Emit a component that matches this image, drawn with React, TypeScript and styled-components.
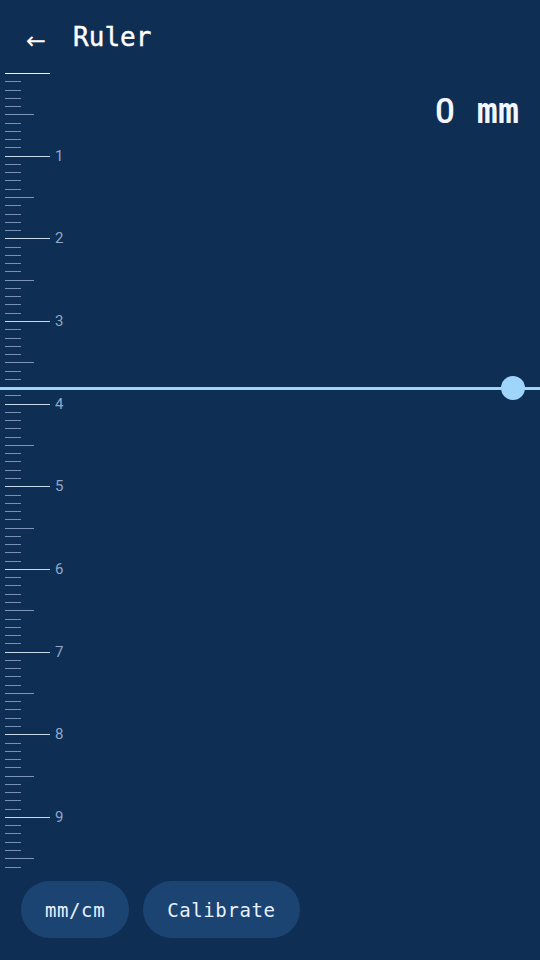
import React from 'react';
import styled, { createGlobalStyle } from 'styled-components';

const GlobalStyle = createGlobalStyle`
  html, body {
    margin: 0;
    padding: 0;
    background: #0f2e54;
  }
  #root {
    height: 960px;
  }
`;

const MM = 8.267;

const Screen = styled.div`
  position: relative;
  width: 540px;
  height: 960px;
  background: #0f2e54;
  display: flex;
  flex-direction: column;
  overflow: hidden;
  font-family: 'DejaVu Sans Mono', monospace;
  color: #ffffff;
`;

const Header = styled.div`
  display: flex;
  align-items: center;
  height: 73px;
  padding: 0 0 0 26px;
  gap: 27px;
  box-sizing: border-box;
`;

const BackButton = styled.button`
  background: none;
  border: none;
  padding: 0;
  color: #ffffff;
  font-family: 'DejaVu Sans', sans-serif;
  font-size: 24px;
  line-height: 1;
  margin-top: 8px;
  cursor: pointer;
`;

const Title = styled.h1`
  margin: 0;
  font-size: 26px;
  font-weight: normal;
  -webkit-text-stroke: 0.4px #ffffff;
`;

const Body = styled.div`
  position: relative;
  flex: 1;
  display: flex;
  flex-direction: column;
`;

const Ruler = styled.div`
  display: flex;
  flex-direction: column;
  padding-left: 5px;
`;

const TickRow = styled.div`
  position: relative;
  height: ${MM}px;
  flex-shrink: 0;
`;

const TickLine = styled.div<{ $len: number; $color: string }>`
  width: ${p => p.$len}px;
  height: 1px;
  background: ${p => p.$color};
`;

const TickLabel = styled.span`
  position: absolute;
  left: 50px;
  top: -8px;
  font-family: Roboto, 'Noto Sans', sans-serif;
  font-size: 15px;
  line-height: 16px;
  color: #8ea8c9;
`;

const Readout = styled.div`
  position: absolute;
  right: 21px;
  top: 18px;
  display: flex;
  align-items: baseline;
  gap: 22px;
  color: #f2f7ff;
`;

const Value = styled.span`
  font-family: Roboto, 'Noto Sans', sans-serif;
  font-size: 35px;
  font-weight: 500;
`;

const Unit = styled.span`
  font-family: 'DejaVu Sans Mono', monospace;
  font-size: 35px;
  font-weight: bold;
`;

const MeasureLine = styled.div`
  position: absolute;
  left: 0;
  right: 0;
  top: 314px;
  height: 3px;
  background: #9fd4fb;
`;

const Handle = styled.div`
  position: absolute;
  right: 15px;
  top: -11px;
  width: 24px;
  height: 24px;
  border-radius: 50%;
  background: #9fd4fb;
`;

const Footer = styled.div`
  display: flex;
  gap: 14px;
  padding: 0 0 22px 21px;
`;

const Pill = styled.button`
  height: 57px;
  padding: 0 24px;
  border: none;
  border-radius: 29px;
  background: #1b4472;
  color: #e8f1fc;
  font-family: 'DejaVu Sans Mono', monospace;
  font-size: 19px;
  letter-spacing: 0.6px;
  cursor: pointer;
`;

const ticks = Array.from({ length: 97 }, (_, i) => i);

export default function App() {
  return (
    <>
      <GlobalStyle />
      <Screen>
        <Header>
          <BackButton type="button">←</BackButton>
          <Title>Ruler</Title>
        </Header>
        <Body>
          <Ruler>
            {ticks.map(i => {
              const cm = i % 10 === 0;
              const half = i % 5 === 0 && !cm;
              const len = cm ? 45 : half ? 29 : 16;
              const color = i === 0 ? '#e9f2fb' : cm ? '#c9d9ec' : half ? '#7d96b8' : '#7891b3';
              return (
                <TickRow key={i}>
                  <TickLine $len={len} $color={color} />
                  {cm && i > 0 && <TickLabel>{i / 10}</TickLabel>}
                </TickRow>
              );
            })}
          </Ruler>
          <Readout>
            <Value>0</Value>
            <Unit>mm</Unit>
          </Readout>
          <MeasureLine>
            <Handle />
          </MeasureLine>
        </Body>
        <Footer>
          <Pill type="button">mm/cm</Pill>
          <Pill type="button">Calibrate</Pill>
        </Footer>
      </Screen>
    </>
  );
}
